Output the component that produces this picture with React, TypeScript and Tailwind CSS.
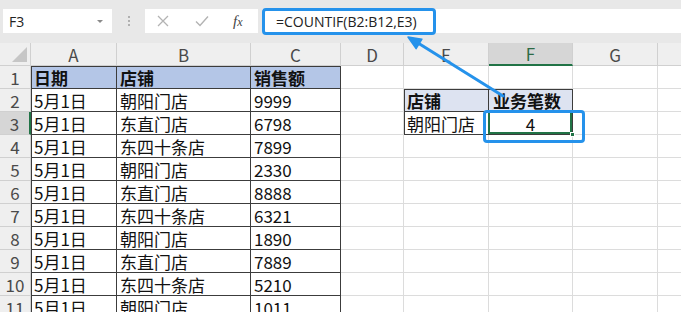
import { twMerge } from "tailwind-merge";

const rows: [string, string, string][] = [
    ["日期", "店铺", "销售额"],
    ["5月1日", "朝阳门店", "9999"],
    ["5月1日", "东直门店", "6798"],
    ["5月1日", "东四十条店", "7899"],
    ["5月1日", "朝阳门店", "2330"],
    ["5月1日", "东直门店", "8888"],
    ["5月1日", "东四十条店", "6321"],
    ["5月1日", "朝阳门店", "1890"],
    ["5月1日", "东直门店", "7889"],
    ["5月1日", "东四十条店", "5210"],
    ["5月1日", "朝阳门店", "1011"],
];

const Cell = ({ className, children }: { className?: string; children?: React.ReactNode }) => (
    <div
        className={twMerge(
            "h-[23px] border-r border-b border-[#dcdcdc] flex items-center px-[3px] text-[17px] leading-none text-[#111] whitespace-nowrap overflow-hidden",
            className
        )}
    >
        {children}
    </div>
);

const HeadCell = ({ className, children }: { className?: string; children?: React.ReactNode }) => (
    <div
        className={twMerge(
            "h-[23px] border-r border-b border-[#d0d0d0] bg-[#efefef] flex items-center justify-center text-[17px] leading-none text-[#4a4a4a]",
            className
        )}
    >
        {children}
    </div>
);

const App = () => {
    return (
        <div className="relative w-[681px] h-[312px] overflow-hidden bg-white font-['Noto_Sans_CJK_SC','Noto_Sans',sans-serif]">
            {/* formula bar */}
            <div className="relative h-[43px] bg-[#e8e8e8] flex flex-row items-start pt-[9px]">
                <div className="ml-[3px] w-[109px] h-[24px] bg-white flex items-center justify-between pl-[6px] pr-[9px] font-['Open_Sans',sans-serif] text-[14px] text-[#222]">
                    <span>F3</span>
                    <span className="w-0 h-0 border-l-[3px] border-r-[3px] border-t-[3px] border-l-transparent border-r-transparent border-t-[#8a8a8a]" />
                </div>
                <div className="w-[33px] h-[24px] flex flex-col items-center justify-center gap-[2px]">
                    <span className="w-[2px] h-[2px] bg-[#b0b0b0]" />
                    <span className="w-[2px] h-[2px] bg-[#b0b0b0]" />
                    <span className="w-[2px] h-[2px] bg-[#b0b0b0]" />
                </div>
                <div className="w-[113px] h-[24px] bg-white flex flex-row items-center">
                    <svg width="12" height="12" viewBox="0 0 12 12" className="ml-[12px]">
                        <path d="M1 1L11 11M11 1L1 11" stroke="#b3b3b3" strokeWidth="1.3" fill="none" />
                    </svg>
                    <svg width="14" height="12" viewBox="0 0 14 12" className="ml-[26px]">
                        <path d="M1 6.5L5 10.5L13 1.5" stroke="#b3b3b3" strokeWidth="1.4" fill="none" />
                    </svg>
                    <span className="ml-[24px] font-['Liberation_Serif',serif] italic text-[15px] text-[#444] leading-none">
                        f<span className="text-[12px]">x</span>
                    </span>
                </div>
                <div className="ml-[4px] flex-1 h-[24px] bg-white flex items-center pl-[14px] font-['Open_Sans',sans-serif] text-[14px] text-[#222]">
                    =COUNTIF(B2:B12,E3)
                </div>
                <div className="absolute left-[262px] top-[8px] w-[174px] h-[27px] border-[3px] border-[#2592eb] rounded-[4px]" />
            </div>

            {/* sheet grid */}
            <div className="grid grid-cols-[31px_86px_134px_90px_63px_85px_84px_85px_1fr]">
                <HeadCell className="relative">
                    <span className="absolute right-[3px] bottom-[3px] w-0 h-0 border-l-[15px] border-t-[15px] border-l-transparent border-t-transparent border-r-0 border-b-0 border-[#c4c4c4] border-solid" style={{ borderBottomWidth: 0 }} />
                    <svg width="15" height="15" viewBox="0 0 15 15" className="absolute right-[3px] bottom-[3px]">
                        <path d="M15 0L15 15L0 15Z" fill="#c6c6c6" />
                    </svg>
                </HeadCell>
                <HeadCell>A</HeadCell>
                <HeadCell>B</HeadCell>
                <HeadCell>C</HeadCell>
                <HeadCell>D</HeadCell>
                <HeadCell>E</HeadCell>
                <HeadCell className="bg-[#d6d6d6] border-b-2 border-b-[#217346] text-[#2d6a45]">F</HeadCell>
                <HeadCell>G</HeadCell>
                <HeadCell className="border-r-0"></HeadCell>

                {rows.map((r, i) => {
                    const n = i + 1;
                    const head = i === 0;
                    const dark = "border-[#3c3c3c]";
                    return [
                        <HeadCell
                            key={`h${n}`}
                            className={n === 3 ? "bg-[#d6d6d6] border-r-2 border-r-[#217346]" : ""}
                        >
                            {n}
                        </HeadCell>,
                        <Cell
                            key={`a${n}`}
                            className={twMerge(
                                dark,
                                head
                                    ? "bg-[#b4c6e7] font-bold shadow-[inset_1px_1px_0_#3c3c3c]"
                                    : "shadow-[inset_1px_0_0_#3c3c3c]"
                            )}
                        >
                            {r[0]}
                        </Cell>,
                        <Cell
                            key={`b${n}`}
                            className={twMerge(dark, head ? "bg-[#b4c6e7] font-bold shadow-[inset_0_1px_0_#3c3c3c]" : "")}
                        >
                            {r[1]}
                        </Cell>,
                        <Cell
                            key={`c${n}`}
                            className={twMerge(dark, head ? "bg-[#b4c6e7] font-bold shadow-[inset_0_1px_0_#3c3c3c]" : "")}
                        >
                            {r[2]}
                        </Cell>,
                        <Cell key={`d${n}`} />,
                        n === 2 ? (
                            <Cell key={`e${n}`} className="border-[#3c3c3c] bg-[#dde3f1] font-bold shadow-[inset_1px_1px_0_#3c3c3c]">
                                店铺
                            </Cell>
                        ) : n === 3 ? (
                            <Cell key={`e${n}`} className="border-[#3c3c3c] shadow-[inset_1px_0_0_#3c3c3c]">
                                朝阳门店
                            </Cell>
                        ) : (
                            <Cell key={`e${n}`} />
                        ),
                        n === 2 ? (
                            <Cell key={`f${n}`} className="border-[#3c3c3c] bg-[#dde3f1] font-bold px-[4px] shadow-[inset_0_1px_0_#3c3c3c]">
                                业务笔数
                            </Cell>
                        ) : n === 3 ? (
                            <Cell key={`f${n}`} className="relative border-[#3c3c3c] justify-center overflow-visible">
                                4
                                <div className="absolute -left-px -top-px w-[calc(100%+1px)] h-[calc(100%+1px)] border-2 border-[#217346]" />
                                <div className="absolute -right-[3px] -bottom-[3px] w-[5px] h-[5px] bg-[#217346] border border-white" />
                            </Cell>
                        ) : (
                            <Cell key={`f${n}`} />
                        ),
                        <Cell key={`g${n}`} />,
                        <Cell key={`x${n}`} className="border-r-0" />,
                    ];
                })}
            </div>

            {/* annotations */}
            <div className="absolute left-[483px] top-[110px] w-[102px] h-[33px] border-[3px] border-[#2592eb] rounded-[4px] pointer-events-none" />
            <svg className="absolute left-0 top-0 pointer-events-none" width="681" height="312" viewBox="0 0 681 312">
                <line x1="418" y1="43" x2="503" y2="96" stroke="#2592eb" strokeWidth="3" strokeLinecap="round" />
                <path d="M408 37L416.1 48.6L421.9 39.2Z" fill="#2592eb" stroke="#2592eb" strokeWidth="1.5" strokeLinejoin="round" />
            </svg>
        </div>
    );
};

export default App;
